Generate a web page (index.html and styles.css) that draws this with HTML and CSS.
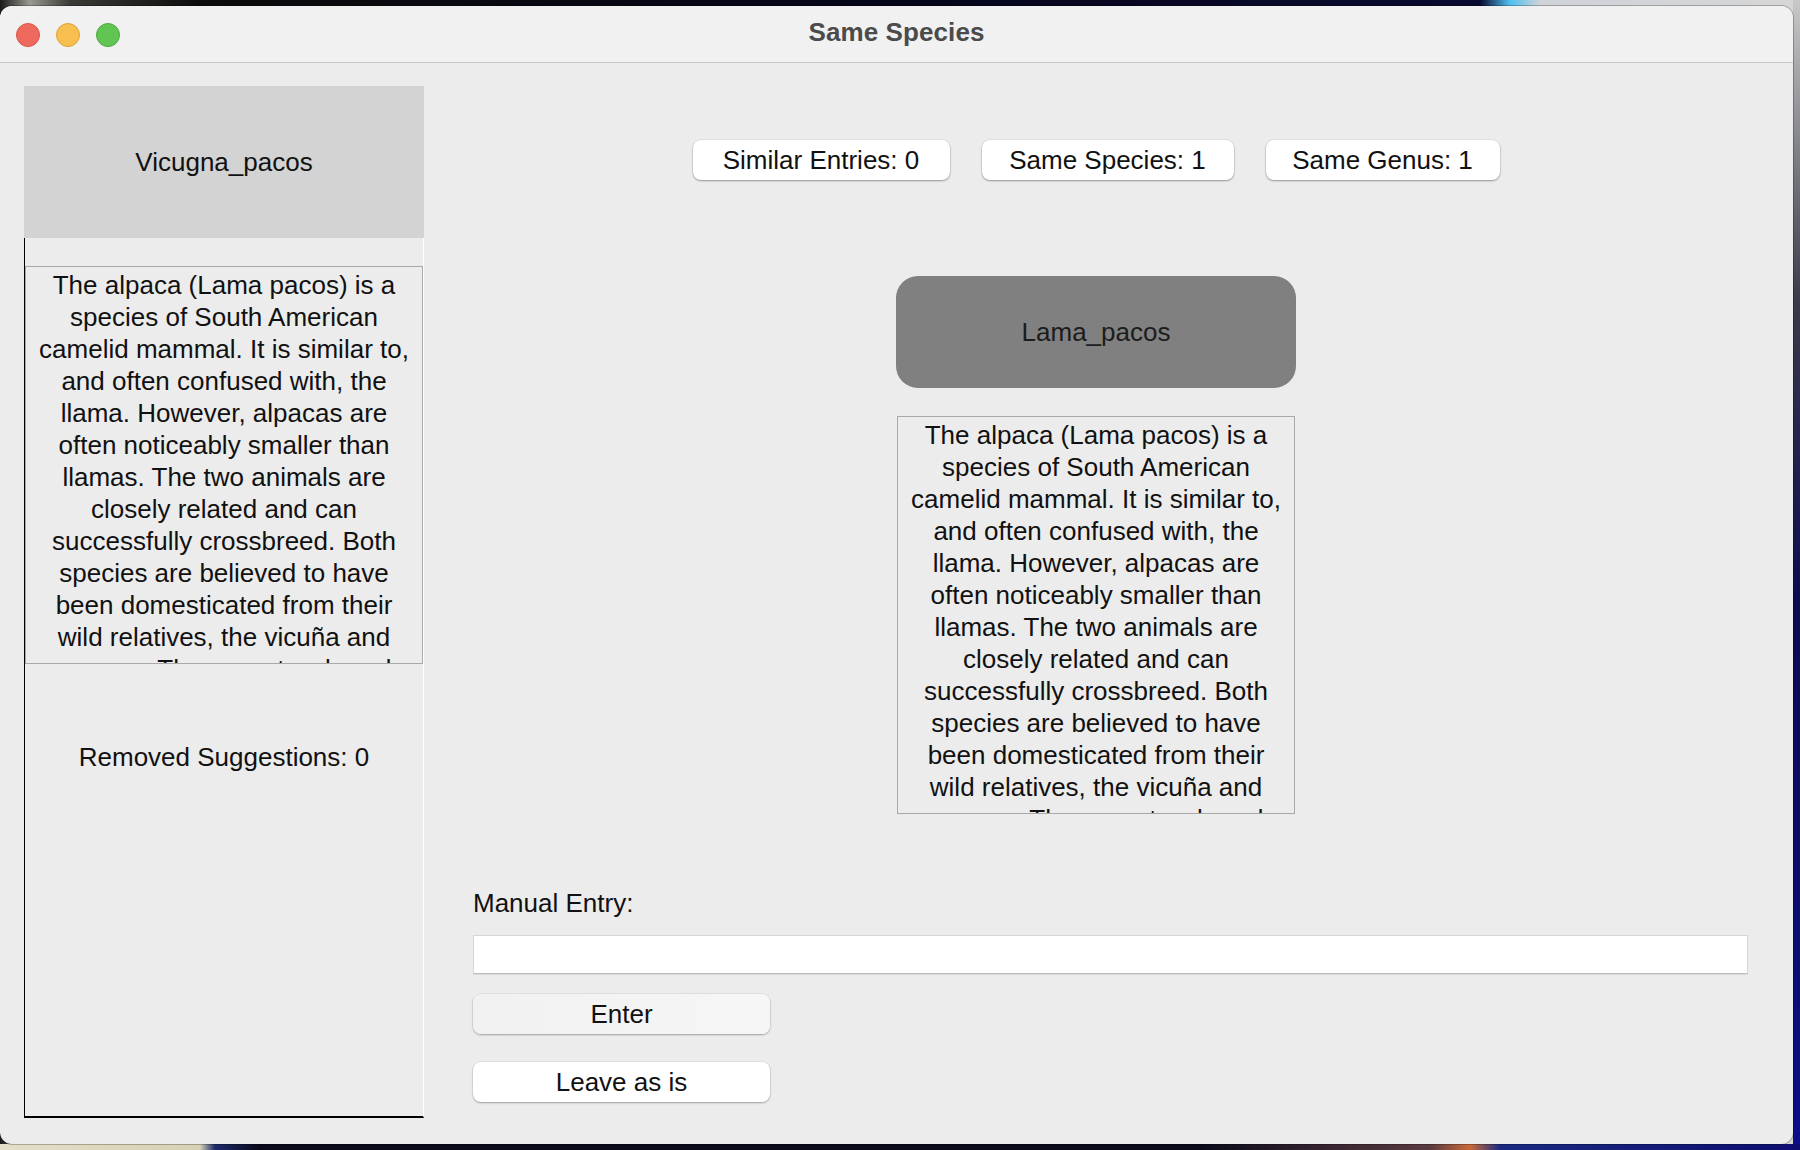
FILE: index.html
```html
<!DOCTYPE html>
<html lang="en">
<head>
<meta charset="utf-8">
<title>Same Species</title>
<link rel="stylesheet" href="styles.css">
</head>
<body>
<div class="desktop">
  <div class="window">
    <header class="titlebar">
      <div class="lights">
        <span class="light light-close"></span>
        <span class="light light-min"></span>
        <span class="light light-max"></span>
      </div>
      <div class="title">Same Species</div>
      <div class="spacer"></div>
    </header>
    <div class="content">
      <aside class="left">
        <div class="species-header">Vicugna_pacos</div>
        <div class="frame">
          <div class="desc">The alpaca (Lama pacos) is a<br>species of South American<br>camelid mammal. It is similar to,<br>and often confused with, the<br>llama. However, alpacas are<br>often noticeably smaller than<br>llamas. The two animals are<br>closely related and can<br>successfully crossbreed. Both<br>species are believed to have<br>been domesticated from their<br>wild relatives, the vicuña and<br>guanaco. There are two breeds</div>
          <div class="removed">Removed Suggestions: 0</div>
        </div>
      </aside>
      <main class="right">
        <div class="centered">
          <div class="stats">
            <div class="stat stat-similar">Similar Entries: 0</div>
            <div class="stat stat-species">Same Species: 1</div>
            <div class="stat stat-genus">Same Genus: 1</div>
          </div>
          <div class="match">Lama_pacos</div>
          <div class="desc desc-match">The alpaca (Lama pacos) is a<br>species of South American<br>camelid mammal. It is similar to,<br>and often confused with, the<br>llama. However, alpacas are<br>often noticeably smaller than<br>llamas. The two animals are<br>closely related and can<br>successfully crossbreed. Both<br>species are believed to have<br>been domesticated from their<br>wild relatives, the vicuña and<br>guanaco. There are two breeds</div>
        </div>
        <div class="manual">
          <label class="manual-label" for="manual">Manual Entry:</label>
          <input class="manual-input" id="manual" type="text">
          <button class="btn btn-enter" type="button">Enter</button>
          <button class="btn btn-leave" type="button">Leave as is</button>
        </div>
      </main>
    </div>
  </div>
</div>
</body>
</html>
```

FILE: styles.css
```css
html, body {
  margin: 0;
  padding: 0;
}

body {
  width: 1800px;
  height: 1150px;
  overflow: hidden;
  font-family: "Liberation Sans", Arial, sans-serif;
  color: #111;
}

.desktop {
  width: 1800px;
  height: 1150px;
  padding-top: 6px;
  box-sizing: border-box;
  background:
    linear-gradient(90deg, #e4dfc8 0, #d6d0b4 200px, #1c2a6a 215px, #0a0a1a 260px, #0a0a1a 1200px, #5a3a40 1430px, #c86a3a 1470px, #1a2a80 1500px, #0d0d70 100%) left bottom / 100% 6px no-repeat,
    linear-gradient(180deg, #c8c8c8 0, #3a3a4a 300px, #0b0b50 600px, #0b0f8a 100%) right top / 7px 100% no-repeat,
    linear-gradient(90deg, #1a1a1a 0, #9a9a92 30px, #3a3a36 70px, #0c0c0c 200px, #05051a 900px, #0a0a30 1480px, #4fc0f0 1510px, #cfd3d8 1540px, #d6d6d6 100%);
}

.window {
  width: 1793px;
  height: 1138px;
  background: #ececec;
  border-radius: 12px;
  overflow: hidden;
  display: flex;
  flex-direction: column;
  box-shadow: 0 0 0 1px rgba(0,0,0,0.25);
}

/* title bar */
.titlebar {
  height: 56px;
  flex: 0 0 56px;
  background: #f1f1f1;
  border-bottom: 1px solid #c9c9c9;
  display: grid;
  grid-template-columns: 1fr auto 1fr;
  align-items: center;
}

.lights {
  display: flex;
  gap: 16px;
  padding-left: 16px;
  padding-top: 1px;
}

.light {
  width: 24px;
  height: 24px;
  border-radius: 50%;
  box-sizing: border-box;
}

.light-close { background: #ef6a5e; border: 1px solid #dd5449; }
.light-min { background: #f6bf50; border: 1px solid #dea236; }
.light-max { background: #61c554; border: 1px solid #4ca93f; }

.title {
  font-weight: bold;
  font-size: 26px;
  color: #4b4b4b;
  margin-top: -4px;
  letter-spacing: 0.1px;
}

/* content */
.content {
  flex: 1;
  display: flex;
  padding-left: 24px;
}

.left {
  width: 400px;
  flex: 0 0 400px;
  padding-top: 23px;
  display: flex;
  flex-direction: column;
}

.species-header {
  height: 152px;
  background: #d3d3d3;
  display: flex;
  align-items: center;
  justify-content: center;
  font-size: 26px;
  color: #111;
}

.frame {
  height: 880px;
  box-sizing: border-box;
  border-left: 1px solid #000;
  border-right: 1px solid #fff;
  border-bottom: 2px solid #000;
  padding-top: 28px;
  display: flex;
  flex-direction: column;
}

.desc {
  width: 398px;
  height: 398px;
  box-sizing: border-box;
  border: 1px solid #a9a9a9;
  padding-top: 2px;
  overflow: hidden;
  text-align: center;
  white-space: nowrap;
  font-size: 26px;
  line-height: 32px;
  color: #111;
}

.removed {
  margin-top: 77px;
  text-align: center;
  font-size: 26px;
  line-height: 32px;
  color: #111;
}

.right {
  width: 1275px;
  margin-left: 49px;
  padding-top: 77px;
  display: flex;
  flex-direction: column;
}

.centered {
  margin-right: 29px;
  display: flex;
  flex-direction: column;
  align-items: center;
}

.stats {
  display: flex;
  gap: 32px;
  height: 40px;
}

.stat {
  height: 40px;
  box-sizing: border-box;
  background: #fff;
  border-radius: 8px;
  box-shadow: 0 1px 2px rgba(0,0,0,0.35), 0 0 0 0.5px rgba(0,0,0,0.08);
  display: flex;
  align-items: center;
  justify-content: center;
  font-size: 26px;
  color: #111;
}

.stat-similar { width: 257px; }
.stat-species { width: 252px; }
.stat-genus { width: 234px; }

.match {
  margin-top: 96px;
  width: 400px;
  height: 112px;
  background: #808080;
  border-radius: 22px;
  display: flex;
  align-items: center;
  justify-content: center;
  font-size: 26px;
  color: #1c1c1c;
}

.desc-match {
  margin-top: 28px;
}

.manual {
  display: flex;
  flex-direction: column;
  align-items: flex-start;
}

.manual-label {
  margin-top: 73px;
  font-size: 26px;
  line-height: 32px;
  color: #111;
}

.manual-input {
  margin: 16px 0 0;
  width: 1275px;
  height: 39px;
  box-sizing: border-box;
  background: #fff;
  border: 1px solid #d6d6d6;
  border-bottom-color: #bdbdbd;
  box-shadow: 0 1px 0 rgba(0,0,0,0.08);
  outline: none;
  padding: 0 8px;
  font-family: inherit;
  font-size: 24px;
}

.btn {
  width: 297px;
  height: 40px;
  border: none;
  border-radius: 8px;
  box-shadow: 0 1px 2px rgba(0,0,0,0.3), 0 0 0 0.5px rgba(0,0,0,0.08);
  font-family: inherit;
  font-size: 26px;
  color: #111;
  padding: 0;
}

.btn-enter {
  margin-top: 20px;
  background: linear-gradient(90deg, #f1f1f1, #f6f6f6);
}

.btn-leave {
  margin-top: 28px;
  background: #fff;
}
```
